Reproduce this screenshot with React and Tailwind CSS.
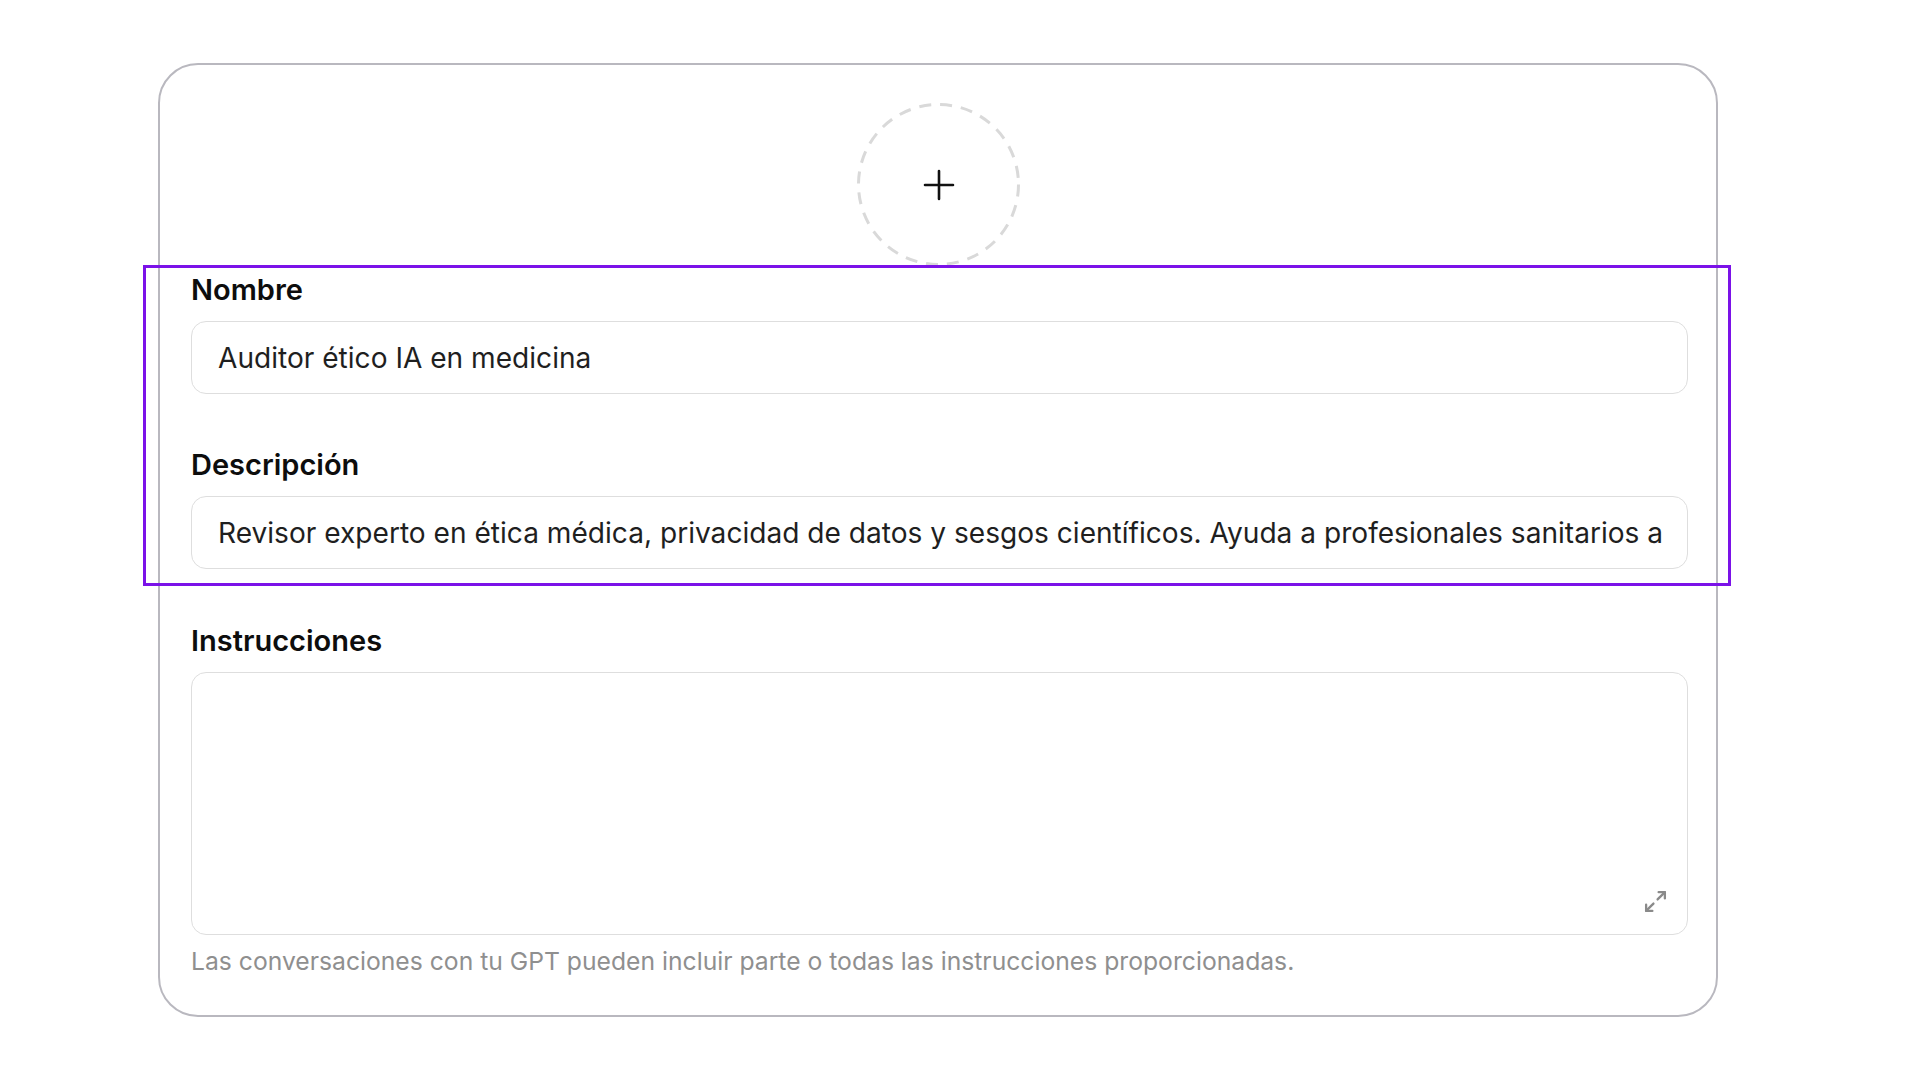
import { Maximize2 } from 'lucide-react';

const Field = ({ label, value, gapTop }) => (
  <div className={gapTop}>
    <div className="text-[29px] leading-[32px] font-semibold text-[#0d0d0d]">{label}</div>
    <div className="mt-[15px] h-[73px] rounded-[15px] border-[1.5px] border-[#dedede] flex items-center pl-[26px] pr-[20px] overflow-hidden">
      <div className="text-[28.1px] leading-[32px] text-[#1f1f1f] whitespace-nowrap">{value}</div>
    </div>
  </div>
);

const App = () => {
  return (
    <div className="min-h-screen bg-white" style={{ fontFamily: 'Inter, "Noto Sans", sans-serif' }}>
      <div className="relative ml-[158px] pt-[63px] w-[1560px]">
        <div className="h-[954px] rounded-[40px] border-2 border-[#b9b8bf] pl-[31px] pr-[28px] pt-[38px] flex flex-col">
          <div className="ml-[666px] w-[163px] h-[163px] flex items-center justify-center relative">
            <svg width="163" height="163" viewBox="0 0 163 163" className="absolute inset-0">
              <circle cx="81.5" cy="81.5" r="80" fill="none" stroke="#d9d9d9" strokeWidth="3" strokeDasharray="12 9" />
            </svg>
            <svg width="32" height="32" viewBox="0 0 32 32" className="relative">
              <path d="M16 2v28M2 16h28" stroke="#111" strokeWidth="2.6" strokeLinecap="round" />
            </svg>
          </div>

          <Field gapTop="mt-[8px]" label="Nombre" value="Auditor ético IA en medicina" />
          <Field
            gapTop="mt-[55px]"
            label="Descripción"
            value="Revisor experto en ética médica, privacidad de datos y sesgos científicos. Ayuda a profesionales sanitarios a"
          />

          <div className="mt-[56px]">
            <div className="text-[29px] leading-[32px] font-semibold text-[#0d0d0d]">Instrucciones</div>
            <div className="relative mt-[15px] h-[263px] rounded-[15px] border-[1.5px] border-[#dedede]">
              <div className="absolute right-[19px] bottom-[20px] text-[#8a8a8a]">
                <Maximize2 size={25} strokeWidth={2.2} />
              </div>
            </div>
            <p className="mt-[12px] text-[24.7px] leading-[28px] text-[#8f8f8f]">
              Las conversaciones con tu GPT pueden incluir parte o todas las instrucciones proporcionadas.
            </p>
          </div>
        </div>

        <div className="absolute left-[-15px] top-[265px] w-[1588px] h-[321px] border-[3px] border-[#7b12e8] pointer-events-none" />
      </div>
    </div>
  );
};

export default App;
